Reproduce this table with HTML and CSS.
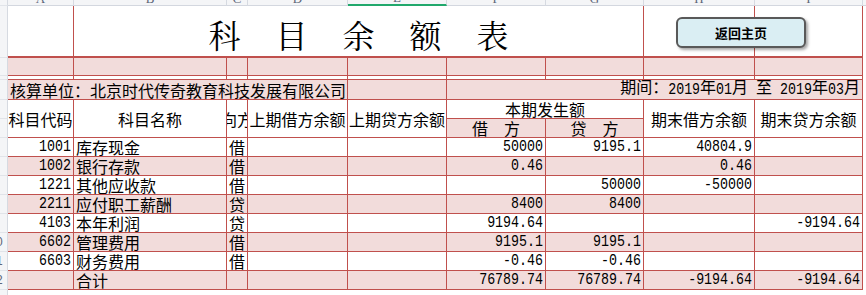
FILE: index.html
```html
<!DOCTYPE html>
<html lang="zh">
<head>
<meta charset="utf-8">
<title>科目余额表</title>
<link rel="stylesheet" href="styles.css">
</head>
<body>
<div class="sheet">
  <!-- column header strip -->
  <div class="rh corner"></div>
  <div class="ch"><span>A</span></div>
  <div class="ch"><span>B</span></div>
  <div class="ch"><span>C</span></div>
  <div class="ch"><span>D</span></div>
  <div class="ch sel"><span>E</span></div>
  <div class="ch"><span>F</span></div>
  <div class="ch"><span>G</span></div>
  <div class="ch"><span>H</span></div>
  <div class="ch"><span>I</span></div>
  <div class="ch fillh"></div>

  <!-- title row -->
  <div class="rh"></div>
  <div class="c t"></div>
  <div class="c t title cs6"><span>科</span><span>目</span><span>余</span><span>额</span><span>表</span></div>
  <div class="c t"></div>
  <div class="c t"></div>
  <div class="fill"></div>

  <!-- pink spacer row -->
  <div class="rh"></div>
  <div class="c p"></div><div class="c p"></div><div class="c p"></div><div class="c p"></div>
  <div class="c p"></div><div class="c p"></div><div class="c p"></div><div class="c p"></div><div class="c p"></div>
  <div class="fill"></div>

  <!-- thin row -->
  <div class="rh"></div>
  <div class="c"></div><div class="c"></div><div class="c"></div><div class="c"></div>
  <div class="c"></div><div class="c"></div><div class="c"></div><div class="c"></div><div class="c"></div>
  <div class="fill"></div>

  <!-- unit / period row -->
  <div class="rh"></div>
  <div class="c p cs4 lo"><span>核算单位：北京时代传奇教育科技发展有限公司</span></div>
  <div class="c p"></div>
  <div class="c p cs4 r lo"><span>期间：<span class="n">2019</span>年<span class="n">01</span>月<span class="n">&nbsp;</span>至<span class="n">&nbsp;</span><span class="n">2019</span>年<span class="n">03</span>月</span></div>
  <div class="fill"></div>

  <!-- header rows -->
  <div class="rh"></div>
  <div class="c h rs2">科目代码</div>
  <div class="c h rs2">科目名称</div>
  <div class="c h rs2">向方</div>
  <div class="c h rs2">上期借方余额</div>
  <div class="c h rs2">上期贷方余额</div>
  <div class="c h cs2">本期发生额</div>
  <div class="c h rs2">期末借方余额</div>
  <div class="c h rs2">期末贷方余额</div>
  <div class="fill rs2"></div>
  <div class="rh"></div>
  <div class="c h p">借　方</div>
  <div class="c h p">贷　方</div>

  <!-- data rows -->
  <div class="rh"></div>
  <div class="c r"><span class="n">1001</span></div><div class="c">库存现金</div><div class="c">借</div>
  <div class="c"></div><div class="c"></div>
  <div class="c r"><span class="n">50000</span></div><div class="c r"><span class="n">9195.1</span></div>
  <div class="c r"><span class="n">40804.9</span></div><div class="c"></div>
  <div class="fill"></div>

  <div class="rh"></div>
  <div class="c p r"><span class="n">1002</span></div><div class="c p">银行存款</div><div class="c p">借</div>
  <div class="c p"></div><div class="c p"></div>
  <div class="c p r"><span class="n">0.46</span></div><div class="c p"></div>
  <div class="c p r"><span class="n">0.46</span></div><div class="c p"></div>
  <div class="fill"></div>

  <div class="rh"></div>
  <div class="c r"><span class="n">1221</span></div><div class="c">其他应收款</div><div class="c">借</div>
  <div class="c"></div><div class="c"></div>
  <div class="c"></div><div class="c r"><span class="n">50000</span></div>
  <div class="c r"><span class="n">-50000</span></div><div class="c"></div>
  <div class="fill"></div>

  <div class="rh"></div>
  <div class="c p r"><span class="n">2211</span></div><div class="c p">应付职工薪酬</div><div class="c p">贷</div>
  <div class="c p"></div><div class="c p"></div>
  <div class="c p r"><span class="n">8400</span></div><div class="c p r"><span class="n">8400</span></div>
  <div class="c p"></div><div class="c p"></div>
  <div class="fill"></div>

  <div class="rh"></div>
  <div class="c r"><span class="n">4103</span></div><div class="c">本年利润</div><div class="c">贷</div>
  <div class="c"></div><div class="c"></div>
  <div class="c r"><span class="n">9194.64</span></div><div class="c"></div>
  <div class="c"></div><div class="c r"><span class="n">-9194.64</span></div>
  <div class="fill"></div>

  <div class="rh"><span class="rn">0</span></div>
  <div class="c p r"><span class="n">6602</span></div><div class="c p">管理费用</div><div class="c p">借</div>
  <div class="c p"></div><div class="c p"></div>
  <div class="c p r"><span class="n">9195.1</span></div><div class="c p r"><span class="n">9195.1</span></div>
  <div class="c p"></div><div class="c p"></div>
  <div class="fill"></div>

  <div class="rh"><span class="rn">1</span></div>
  <div class="c r"><span class="n">6603</span></div><div class="c">财务费用</div><div class="c">借</div>
  <div class="c"></div><div class="c"></div>
  <div class="c r"><span class="n">-0.46</span></div><div class="c r"><span class="n">-0.46</span></div>
  <div class="c"></div><div class="c"></div>
  <div class="fill"></div>

  <div class="rh"><span class="rn">2</span></div>
  <div class="c p"></div><div class="c p">合计</div><div class="c p"></div>
  <div class="c p"></div><div class="c p"></div>
  <div class="c p r"><span class="n">76789.74</span></div><div class="c p r"><span class="n">76789.74</span></div>
  <div class="c p r"><span class="n">-9194.64</span></div><div class="c p r"><span class="n">-9194.64</span></div>
  <div class="fill"></div>

  <div class="rh"></div>

  <button class="home" type="button">返回主页</button>
</div>
</body>
</html>
```

FILE: styles.css
```css
* { box-sizing: border-box; }
html, body { margin: 0; padding: 0; background: #fff; overflow: hidden; }
body {
  width: 866px;
  height: 295px;
  font-family: "Noto Sans CJK SC", sans-serif;
  font-size: 16px;
  color: #000;
}
.sheet {
  position: relative;
  display: grid;
  grid-template-columns: 8px 66px 153px 21px 100px 99px 99px 98px 111px 108px 1fr;
  grid-template-rows: 6px 52px 18px 4px 20px 19px 19px repeat(8, 19px) 20px;
}
.rh {
  background: #f4f5f7;
  border-right: 1px solid #d6dae1;
  border-bottom: 1px solid #e1e4e9;
  overflow: hidden;
  display: flex;
  align-items: center;
}
.rn {
  font: 12px "Liberation Sans", sans-serif;
  color: #5c6678;
  margin-left: -4px;
}
.ch {
  background: #f4f5f7;
  border-right: 1px solid #d6dae1;
  border-bottom: 1px solid #d3d7df;
  overflow: hidden;
  display: flex;
  justify-content: center;
  align-items: flex-end;
}
.ch span {
  font: 13px/1 "Liberation Serif", serif;
  color: #5c6678;
}
.ch.sel { border-bottom: 2px solid #21a86c; }
.fillh { border-right: none; }
.fill { background: #fff; }

.c {
  border-right: 1px solid #c0504d;
  border-bottom: 1px solid #c0504d;
  display: flex;
  align-items: center;
  overflow: hidden;
  white-space: nowrap;
  padding: 0 2px;
  line-height: 16px;
}
.p { background: #f2dcdb; }
.t { border-bottom-width: 2px; }
.r { justify-content: flex-end; padding-right: 2px; }
.h { justify-content: center; padding: 0; }
.lo { align-items: flex-end; padding-bottom: 1px; }
.rs2 { grid-row: span 2; }
.cs2 { grid-column: span 2; }
.cs4 { grid-column: span 4; }
.cs6 { grid-column: span 6; }

.n {
  font-family: "Liberation Mono", monospace;
  font-size: 13.3px;
  display: inline-block;
  transform: scaleY(1.3);
}

.title {
  justify-content: center;
  gap: 35px;
  font-family: "Noto Serif CJK SC", "Noto Sans CJK SC", serif;
  font-size: 32px;
  line-height: 32px;
  padding-top: 5px;
}

.home {
  position: absolute;
  left: 676px;
  top: 17px;
  width: 130px;
  height: 31px;
  border: 2px solid #595959;
  border-radius: 6px;
  background: #daeef3;
  box-shadow: 2px 2px 3px rgba(0, 0, 0, 0.35);
  font-family: "Noto Sans CJK SC", sans-serif;
  font-weight: bold;
  font-size: 13px;
  color: #000;
  display: flex;
  align-items: center;
  justify-content: center;
  padding: 0;
}
```
